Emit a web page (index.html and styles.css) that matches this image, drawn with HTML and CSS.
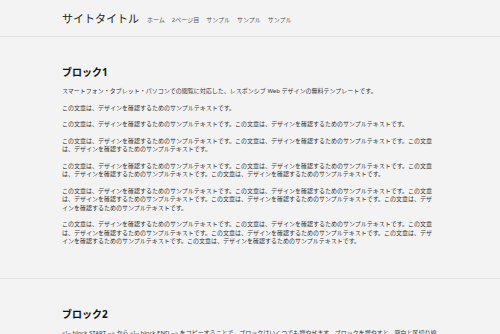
FILE: index.html
```html
<!DOCTYPE html>
<html lang="ja">
<head>
  <meta charset="UTF-8" />
  <meta name="viewport" content="width=device-width, initial-scale=1.0" />
  <title>サイトタイトル</title>
  <link rel="stylesheet" href="styles.css">
</head>
<body>
  <header class="site-header">
    <div class="inner header-inner">
      <h1 class="site-title">サイトタイトル</h1>
      <nav class="global-nav">
        <a href="#">ホーム</a>
        <a href="#">2ページ目</a>
        <a href="#">サンプル</a>
        <a href="#">サンプル</a>
        <a href="#">サンプル</a>
      </nav>
    </div>
  </header>

  <!-- block START -->
  <section class="block">
    <div class="inner">
      <h2>ブロック1</h2>
      <p>スマートフォン・タブレット・パソコンでの閲覧に対応した、レスポンシブ Web デザインの無料テンプレートです。</p>
      <p>この文章は、デザインを確認するためのサンプルテキストです。</p>
      <p>この文章は、デザインを確認するためのサンプルテキストです。この文章は、デザインを確認するためのサンプルテキストです。</p>
      <p>この文章は、デザインを確認するためのサンプルテキストです。この文章は、デザインを確認するためのサンプルテキストです。この文章は、デザインを確認するためのサンプルテキストです。</p>
      <p>この文章は、デザインを確認するためのサンプルテキストです。この文章は、デザインを確認するためのサンプルテキストです。この文章は、デザインを確認するためのサンプルテキストです。この文章は、デザインを確認するためのサンプルテキストです。</p>
      <p>この文章は、デザインを確認するためのサンプルテキストです。この文章は、デザインを確認するためのサンプルテキストです。この文章は、デザインを確認するためのサンプルテキストです。この文章は、デザインを確認するためのサンプルテキストです。この文章は、デザインを確認するためのサンプルテキストです。</p>
      <p>この文章は、デザインを確認するためのサンプルテキストです。この文章は、デザインを確認するためのサンプルテキストです。この文章は、デザインを確認するためのサンプルテキストです。この文章は、デザインを確認するためのサンプルテキストです。この文章は、デザインを確認するためのサンプルテキストです。この文章は、デザインを確認するためのサンプルテキストです。</p>
    </div>
  </section>
  <!-- block END -->

  <section class="block">
    <div class="inner">
      <h2>ブロック2</h2>
      <p>&lt;!-- block START --&gt; から &lt;!-- block END --&gt; をコピーすることで、ブロックはいくつでも増やせます。ブロックを増やすと、空白と区切り線が入ります。</p>
    </div>
  </section>
</body>
</html>
```

FILE: styles.css
```css
body {
  margin: 0;
  font-family: "Noto Sans", "Noto Sans CJK JP", sans-serif;
  background: #f3f3f3;
  color: #333;
}
.inner {
  max-width: 376px;
  margin: 0 auto;
}
.site-header {
  border-bottom: 1px solid #e2e2e2;
}
.header-inner {
  display: flex;
  align-items: center;
  height: 36px;
}
.site-title {
  margin: 0;
  font-size: 11px;
  font-weight: normal;
  color: #222;
}
.global-nav {
  display: flex;
  gap: 7px;
  margin-left: 8px;
  padding-top: 2px;
}
.global-nav a {
  font-size: 6px;
  color: #555;
  text-decoration: none;
}
.block {
  padding: 29px 0 24px;
  border-bottom: 1px solid #e2e2e2;
}
.block h2 {
  margin: 0 0 9px;
  font-size: 10px;
  line-height: 12px;
  color: #111;
}
.block p {
  margin: 0 0 8px;
  font-size: 6px;
  line-height: 8.5px;
  color: #333;
}
```
